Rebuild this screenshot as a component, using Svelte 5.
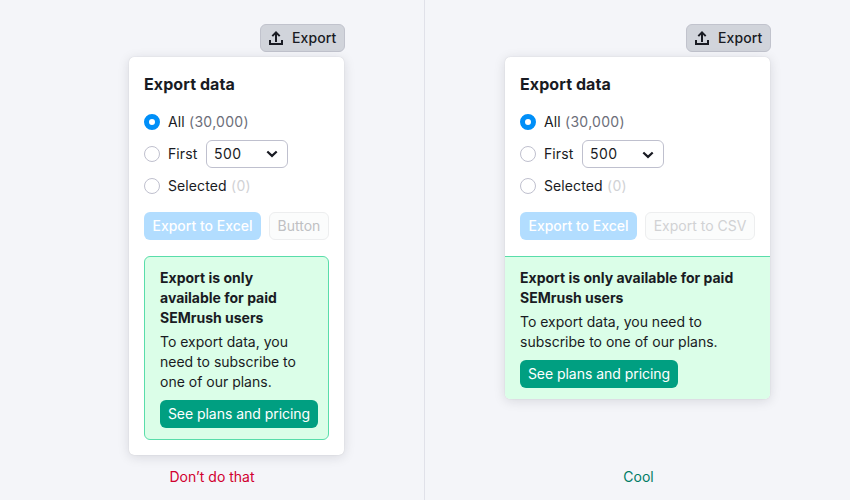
<script>
  const examples = [
    { kind: 'bad', caption: 'Don’t do that', second: 'Button' },
    { kind: 'good', caption: 'Cool', second: 'Export to CSV' }
  ];
</script>

<main>
  {#each examples as example}
    <section class={example.kind}>
      <div class="example">
        <button class="trigger">
          <svg width="16" height="16" viewBox="0 0 16 16" fill="none" stroke="#191b23" stroke-width="2">
            <path d="M2 10v4h12v-4M8 12V2.6M4.3 6.1 8 2.4l3.7 3.7" />
          </svg>
          <span>Export</span>
        </button>
        <div class="card">
          <div class="form">
            <h2>Export data</h2>
            <div class="row">
              <span class="radio checked"></span>
              <span class="label all">All</span>
              <span class="count">(30,000)</span>
            </div>
            <div class="row">
              <span class="radio"></span>
              <span class="label first">First</span>
              <div class="select">
                <span>500</span>
                <svg width="12" height="8" viewBox="0 0 12 8" fill="none" stroke="#191b23" stroke-width="2.2">
                  <path d="M1.3 1.5 6 5.9l4.7-4.4" />
                </svg>
              </div>
            </div>
            <div class="row">
              <span class="radio"></span>
              <span class="label selected">Selected</span>
              <span class="count off">(0)</span>
            </div>
            <div class="actions">
              <button class="primary" disabled>Export to Excel</button>
              <button class="secondary" disabled>{example.second}</button>
            </div>
          </div>
          <div class="notice">
            <h3>Export is only available for paid SEMrush users</h3>
            <p>To export data, you need to subscribe to one of our plans.</p>
            <button class="plans">See plans and pricing</button>
          </div>
        </div>
      </div>
      <div class="caption">{example.caption}</div>
    </section>
  {/each}
</main>

<style>
  :global(body) {
    margin: 0;
  }
  main {
    display: flex;
    width: 850px;
    height: 500px;
    overflow: hidden;
    background: #f4f5f9;
    color: #191b23;
    font: 400 14px/20px Inter, "Liberation Sans", sans-serif;
  }
  section {
    box-sizing: border-box;
    height: 500px;
    padding-top: 24px;
    display: flex;
    flex-direction: column;
  }
  .bad {
    width: 425px;
    padding-left: 129px;
    border-right: 1px solid #e0e1e9;
  }
  .good {
    width: 425px;
    padding-left: 80px;
  }
  .example {
    display: flex;
    flex-direction: column;
    height: 443px;
  }
  .bad .example {
    width: 215px;
  }
  .good .example {
    width: 265px;
  }
  button {
    box-sizing: border-box;
    height: 28px;
    margin: 0;
    padding: 0;
    border: 0;
    border-radius: 6px;
    font: inherit;
    color: inherit;
    white-space: nowrap;
    flex: none;
  }
  .trigger {
    display: flex;
    align-items: center;
    align-self: flex-end;
    gap: 8px;
    width: 85px;
    margin-right: -1px;
    padding-left: 7px;
    border: 1px solid #c1c3cd;
    background: #d1d4db;
    font-weight: 500;
    letter-spacing: 0.1px;
  }
  .card {
    box-sizing: border-box;
    margin-top: 5px;
    border-radius: 5px;
    background: #fff;
    box-shadow: 0 0 1px rgba(25, 27, 35, 0.2), 0 2px 12px rgba(25, 27, 35, 0.13);
    overflow: hidden;
  }
  .form {
    padding: 15px 15px 16px;
  }
  h2 {
    margin: 0 0 14px;
    font-size: 16px;
    line-height: 24px;
    font-weight: 700;
    letter-spacing: 0.08px;
  }
  .row {
    display: flex;
    align-items: center;
    height: 24px;
    margin-bottom: 8px;
  }
  .radio {
    box-sizing: border-box;
    width: 16px;
    height: 16px;
    margin-right: 8px;
    border: 1px solid #bfc0ce;
    border-radius: 50%;
    background: #fff;
  }
  .checked {
    border: 5px solid #008ff8;
  }
  .label {
    white-space: nowrap;
    letter-spacing: 0.1px;
  }
  .all {
    width: 21px;
  }
  .first {
    width: 38px;
  }
  .selected {
    width: 63px;
  }
  .count {
    color: #6c6e79;
    letter-spacing: 0.3px;
  }
  .off {
    color: #d1d2d5;
  }
  .select {
    box-sizing: border-box;
    display: flex;
    align-items: center;
    justify-content: space-between;
    width: 82px;
    height: 28px;
    padding: 0 9px 0 7px;
    border: 1px solid #bfc0ce;
    border-radius: 6px;
    letter-spacing: 0.4px;
  }
  .good .select svg {
    margin-top: 2px;
  }
  .actions {
    display: flex;
    gap: 8px;
    padding-top: 6px;
  }
  .primary {
    width: 117px;
    background: #b2ddff;
    color: #fff;
    font-weight: 500;
  }
  .secondary {
    flex: 1;
    border: 1px solid #edeeef;
    background: #fbfcfc;
    color: #bfc0c3;
  }
  .good .secondary {
    color: #d1d2d4;
  }
  .notice {
    box-sizing: border-box;
    background: #dbfee8;
  }
  .bad .notice {
    height: 184px;
    margin: 0 15px 15px;
    padding: 11px 10px 11px 15px;
    border: 1px solid #59ddaa;
    border-radius: 6px;
  }
  .good .notice {
    height: 143px;
    padding: 11px 15px;
    border-top: 1px solid #59ddaa;
  }
  h3 {
    margin: 0 0 4px;
    font-size: 14px;
    line-height: 20px;
    font-weight: 700;
  }
  .bad h3 {
    width: 135px;
  }
  p {
    margin: 0 0 8px;
  }
  .bad p {
    width: 145px;
  }
  .good p {
    width: 215px;
  }
  .plans {
    width: 158px;
    background: #009f81;
    color: #fff;
    letter-spacing: -0.04px;
  }
  .caption {
    text-align: center;
  }
  .bad .caption {
    width: 166px;
    color: #d1002f;
  }
  .good .caption {
    width: 267px;
    color: #007c65;
  }
</style>
